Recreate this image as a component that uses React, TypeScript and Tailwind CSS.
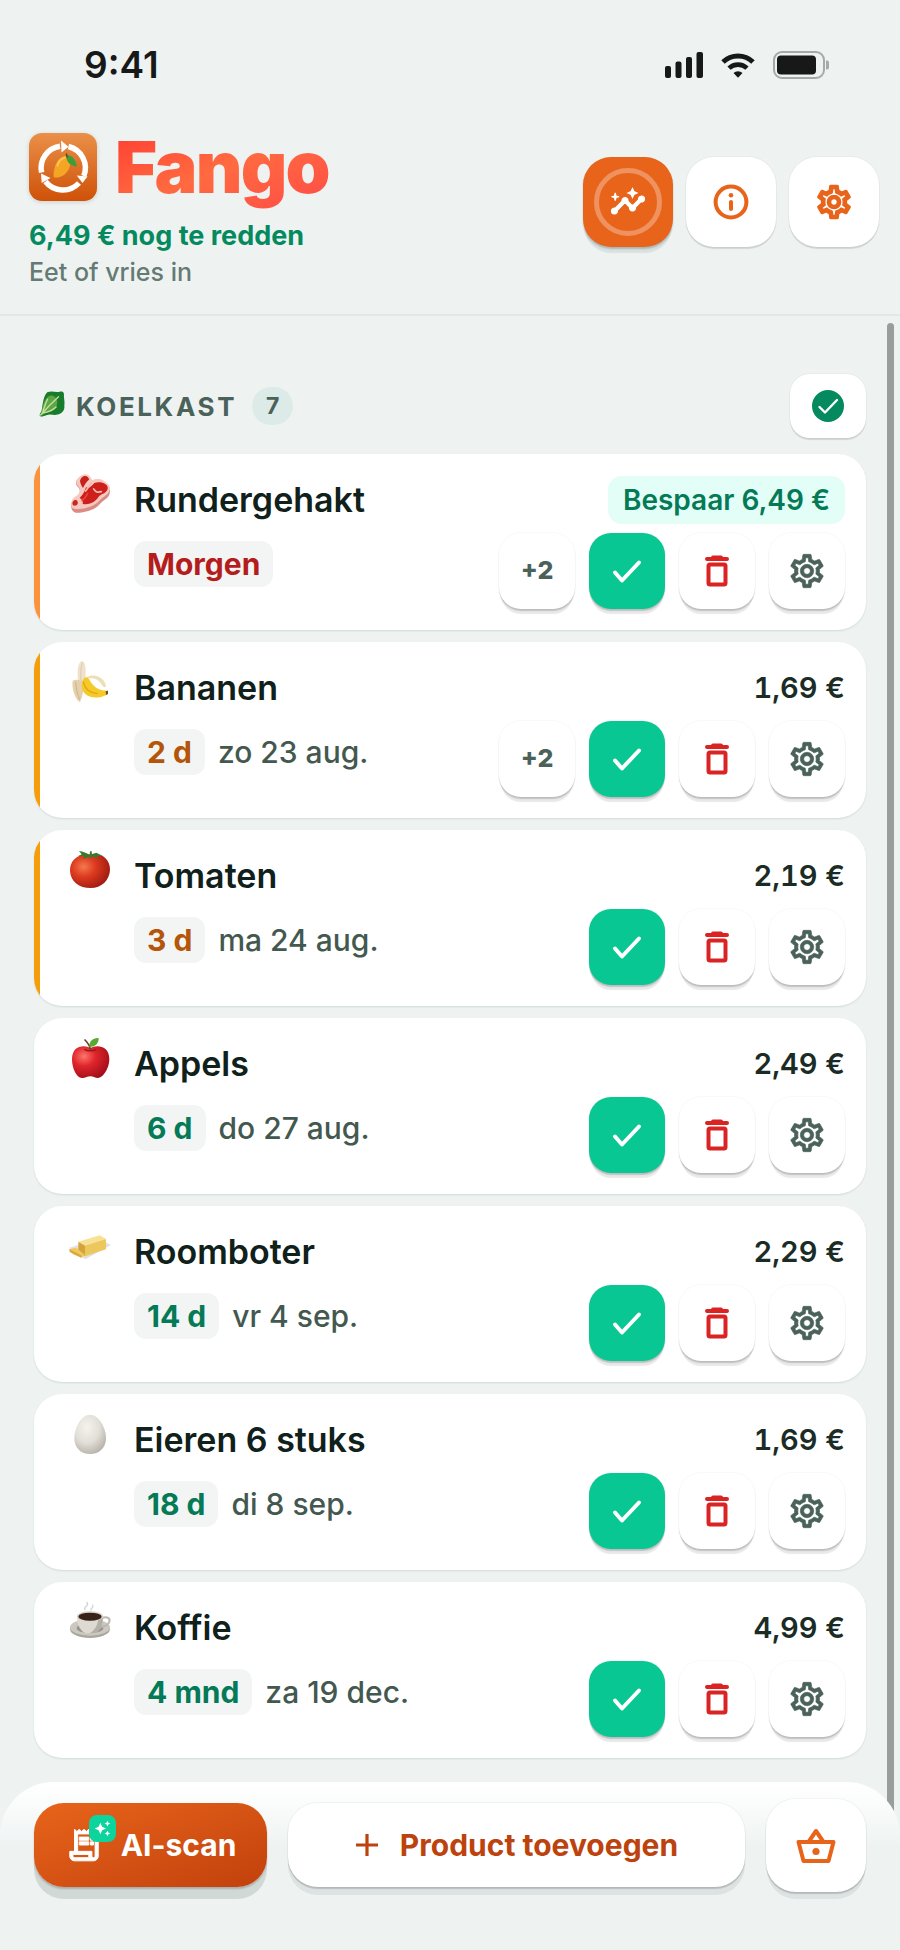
import type { ReactNode } from "react";
import { MdAutoAwesome, MdInsights, MdOutlineReceiptLong, MdOutlineSettings } from "react-icons/md";

type Tone = "urgent" | "soon" | "fresh";

interface Product {
  id: string;
  name: string;
  left: string;
  date?: string;
  price: string;
  save?: boolean;
  extra?: string;
  tone: Tone;
  stripe?: string;
  icon: ReactNode;
}

const toneClass: Record<Tone, string> = {
  urgent: "text-[#b51c1c]",
  soon: "text-[#b4550a]",
  fresh: "text-[#047a57]",
};

function Art({ children }: { children: ReactNode }) {
  return (
    <svg viewBox="0 0 120 120" className="size-10 shrink-0 overflow-visible" aria-hidden="true">
      {children}
    </svg>
  );
}

const steak = (
  <Art>
    <path d="M44 4c8 0 17 9 19 18 12-5 26-6 36 2 10 7 18 14 18 26s-5 20-16 27-18 20-32 27-40 14-55 12C4 114-1 104 1 90c1-11 9-15 18-22 8-7 9-17 6-24-3-6-10-8-10-16C15 14 31 4 44 4z" fill="#d98b84" />
    <path d="M44 1c8 0 17 9 19 18 12-5 26-6 36 2 10 7 18 12 18 22s-8 19-18 25-18 19-32 26-38 13-53 11S0 94 2 83s9-13 17-19c8-7 9-17 6-24-3-6-9-8-9-14C16 12 32 1 44 1z" fill="#f6c9c0" />
    <path d="M38 7c8-4 14 3 17 9-7 6-14 16-19 26-4-6-8-13-9-22 2-6 5-11 11-13z" fill="#c7221b" />
    <path d="M70 27c14-5 37-1 40 13 2 11-9 18-20 22-7 3-8 9-15 16-12 11-28 15-40 12 3-11-6-16-9-19 10-8 15-19 19-31 9 5 17-4 25-13z" fill="#cf1f1b" />
    <path d="M5 84c5-8 13-7 15 0 2 8-4 11-10 11-5 0-7-6-5-11z" fill="#c9271f" />
    <path d="M61 27L44 51M68 45c7 10 11 11 23 8" stroke="#f4b9ad" strokeWidth="5" fill="none" strokeLinecap="round" />
    <path d="M50 58c-5 11-9 17-17 22" stroke="#e74b3f" strokeWidth="4" fill="none" strokeLinecap="round" />
  </Art>
);

const banana = (
  <Art>
    <path d="M22 60C17 35 20 3 31-2c12-2 13 18 13 33 0 12-1 21-2 30z" fill="#efe1cb" />
    <path d="M34 2c-5 16-6 35-4 54" stroke="#dccbb0" strokeWidth="3" fill="none" />
    <path d="M5 56c9-5 25-3 32 4 2 18-1 42-10 60-10-2-26-36-22-64z" fill="#e5d0ac" />
    <path d="M14 60c1 21 6 38 12 53" stroke="#cbb48c" strokeWidth="3" fill="none" />
    <path d="M46 46c24-14 56 2 59 26-3 6-9 4-12-2-9-16-23-24-42-20z" fill="#efdfb9" />
    <path d="M38 50c7-8 14-3 19 6 12 20 29 31 53 30 3 5 1 11-4 13-27 14-65 9-72-17-3-12-2-24 4-32z" fill="#f5c928" />
    <path d="M37 59c4 21 18 34 43 36" stroke="#e2a911" strokeWidth="4" fill="none" />
    <path d="M104 87l7-1v10l-6 3z" fill="#76521c" />
  </Art>
);

const tomato = (
  <Art>
    <defs>
      <radialGradient id="tomatoSkin" cx="34%" cy="38%" r="75%">
        <stop offset="0" stopColor="#f47a4c" />
        <stop offset="0.4" stopColor="#dc3a1f" />
        <stop offset="1" stopColor="#96160f" />
      </radialGradient>
    </defs>
    <path d="M55 13c32-9 63 12 62 46-1 32-26 55-58 55C25 114-2 94-3 62-4 31 22 9 55 13z" fill="url(#tomatoSkin)" />
    <path d="M56 16c-9-8-20-11-32-13l8 10-10 5 18-1-4 11 18-8 5 7 4-8 20 8-7-10 19 1-19-10-13 5-1-9h-5z" fill="#397a30" />
  </Art>
);

const apple = (
  <Art>
    <defs>
      <radialGradient id="appleSkin" cx="32%" cy="32%" r="78%">
        <stop offset="0" stopColor="#ff756b" />
        <stop offset="0.4" stopColor="#de252b" />
        <stop offset="1" stopColor="#9e0c18" />
      </radialGradient>
    </defs>
    <path d="M58 31c12-11 57-13 57 32 0 31-21 57-34 57-10 0-14-5-23-5s-15 6-26 5C17 119 3 92 3 64 3 19 45 20 58 31z" fill="url(#appleSkin)" />
    <path d="M40 34c10 6 26 6 36 0" stroke="#9f131c" strokeWidth="4" fill="none" />
    <path d="M58 35C57 22 49 13 42 6" stroke="#69402c" strokeWidth="5" strokeLinecap="round" fill="none" />
    <path d="M55 27C54 10 65-1 83 0c1 15-10 27-28 27z" fill="#57ab2f" />
  </Art>
);

const butter = (
  <Art>
    <path d="M-5 65L80 38l40 19-77 43z" fill="#dfe1e6" />
    <path d="M22 47l64-19 19 11-63 20z" fill="#f9e193" />
    <path d="M42 59l63-20v31L42 91z" fill="#ecc75c" />
    <path d="M22 47l20 12v32L22 79z" fill="#d4a33c" />
    <path d="M-5 69l20-4 27 22-10 8-26-10z" fill="#efc95e" />
    <path d="M-5 69l1 9 35 17v-7z" fill="#d9a940" />
  </Art>
);

const egg = (
  <Art>
    <defs>
      <radialGradient id="eggShell" cx="40%" cy="32%" r="72%">
        <stop offset="0" stopColor="#f5f3ee" />
        <stop offset="0.55" stopColor="#e2dfd8" />
        <stop offset="1" stopColor="#b7b2aa" />
      </radialGradient>
    </defs>
    <path d="M57 2c27 0 48 41 48 70 0 31-21 48-48 48S10 103 10 72C10 43 30 2 57 2z" fill="url(#eggShell)" />
  </Art>
);

const coffee = (
  <Art>
    <ellipse cx="57" cy="81" rx="60" ry="27" fill="#aaa69e" />
    <ellipse cx="57" cy="76" rx="60" ry="25" fill="#cbc8c2" />
    <ellipse cx="57" cy="79" rx="40" ry="15" fill="#99958e" />
    <path d="M92 49c15-7 27-1 23 10-3 10-16 15-29 16" fill="none" stroke="#bcb8b0" strokeWidth="6" />
    <path d="M18 43h78c0 27-11 46-27 51H45C29 89 18 70 18 43z" fill="#ded9d1" />
    <path d="M82 48h14c0 26-12 42-27 46H56c15-9 25-24 26-46z" fill="#b5b0a7" />
    <ellipse cx="57" cy="43" rx="39" ry="15" fill="#d7d2ca" />
    <ellipse cx="57" cy="44" rx="35" ry="12" fill="#38231b" />
    <path d="M42 23c-5-13 14-9 6-22M60 25c-2-9 10-7 5-16" fill="none" stroke="#d3d4d5" strokeWidth="4" strokeLinecap="round" />
  </Art>
);

const products: Product[] = [
  { id: "rundergehakt", name: "Rundergehakt", left: "Morgen", price: "6,49 €", save: true, extra: "+2", tone: "urgent", stripe: "bg-[#fb923c]", icon: steak },
  { id: "bananen", name: "Bananen", left: "2 d", date: "zo 23 aug.", price: "1,69 €", extra: "+2", tone: "soon", stripe: "bg-[#f59e0b]", icon: banana },
  { id: "tomaten", name: "Tomaten", left: "3 d", date: "ma 24 aug.", price: "2,19 €", tone: "soon", stripe: "bg-[#f59e0b]", icon: tomato },
  { id: "appels", name: "Appels", left: "6 d", date: "do 27 aug.", price: "2,49 €", tone: "fresh", icon: apple },
  { id: "roomboter", name: "Roomboter", left: "14 d", date: "vr 4 sep.", price: "2,29 €", tone: "fresh", icon: butter },
  { id: "eieren", name: "Eieren 6 stuks", left: "18 d", date: "di 8 sep.", price: "1,69 €", tone: "fresh", icon: egg },
  { id: "koffie", name: "Koffie", left: "4 mnd", date: "za 19 dec.", price: "4,99 €", tone: "fresh", icon: coffee },
];

function StatusBar() {
  return (
    <div className="flex h-[130px] items-center justify-between pr-[71px] pl-[84px] text-[#171918]">
      <span className="text-[37px] font-semibold">9:41</span>
      <div className="flex items-center gap-[18px]">
        <svg viewBox="0 0 38 26" className="h-[26px] w-[38px]" fill="currentColor" aria-hidden="true">
          <rect x="0" y="14" width="6" height="12" rx="2" />
          <rect x="10.5" y="9.5" width="6" height="16.5" rx="2" />
          <rect x="21" y="5" width="6" height="21" rx="2" />
          <rect x="31.5" y="0" width="6.5" height="26" rx="2" />
        </svg>
        <svg viewBox="0 0 34 25" className="h-[25px] w-[34px]" aria-hidden="true">
          <path d="M2 9a21.5 21.5 0 0 1 30 0" fill="none" stroke="currentColor" strokeWidth="5" />
          <path d="M8 15.2a13 13 0 0 1 18 0" fill="none" stroke="currentColor" strokeWidth="4.6" />
          <path d="M12.5 20a6.4 6.4 0 0 1 9 0L17 24.8z" fill="currentColor" />
        </svg>
        <svg viewBox="0 0 56 28" className="h-7 w-14" aria-hidden="true">
          <rect x="1" y="1" width="50" height="26" rx="8" fill="none" stroke="#a5a9a7" strokeWidth="2" />
          <rect x="4" y="4.5" width="39" height="19" rx="4" fill="currentColor" />
          <path d="M53 9.500h1a2 2 0 0 1 2 2v5a2 2 0 0 1-2 2h-1z" fill="#a5a9a7" />
        </svg>
      </div>
    </div>
  );
}

function Logo() {
  return (
    <svg viewBox="0 0 68 68" className="size-[68px] drop-shadow-sm" aria-hidden="true">
      <defs>
        <linearGradient id="logoBg" x2="0" y2="1">
          <stop offset="0" stopColor="#ea9049" />
          <stop offset="1" stopColor="#cf5108" />
        </linearGradient>
      </defs>
      <rect width="68" height="68" rx="13" fill="url(#logoBg)" />
      <g fill="none" stroke="#fff" strokeWidth="5.5">
        <path d="M12.600 39.500A22 22 0 0 1 31 13.200" />
        <path d="M39.500 13.500A22 22 0 0 1 54.800 43" />
        <path d="M50 50A22 22 0 0 1 16.500 48.500" />
      </g>
      <g fill="#fff">
        <path d="M32 7.500l7.500 6.200-7 5.800z" />
        <path d="M58.500 43.500l-5 6.500-5.700-7.500z" />
        <path d="M12 40.500l9.500 4.500-8.800 5z" />
      </g>
      <path d="M38 23c4 2 4.500 8 1.500 13.500C36.500 42 32 45 25 44.500c-.8-3.500-.3-6 .5-9C27 29 31 23 38 23z" fill="#f5a524" />
      <path d="M36 24.500c-4 1-6.500 4-7.500 8" stroke="#ffc650" strokeWidth="2" fill="none" strokeLinecap="round" />
      <path d="M37 22.500c6-1 9.500 4 10.800 11-6-.5-10.300-4-10.800-11z" fill="#3c9d3a" />
      <path d="M38 24l-.5-3" stroke="#6c4520" strokeWidth="1.5" strokeLinecap="round" />
    </svg>
  );
}

function Header() {
  return (
    <header className="flex items-start justify-between border-b-2 border-[#e0e9e6] pr-[21px] pb-6 pl-[29px]">
      <div className="pt-[3px]">
        <div className="flex h-[68px] items-center gap-[18px]">
          <Logo />
          <h1 className="bg-linear-to-br from-[#ff3131] via-[#ff6a40] to-[#ff4747] bg-clip-text py-3 text-[72px] leading-[72px] font-black tracking-tight text-transparent">
            Fango
          </h1>
        </div>
        <p className="mt-[17px] text-[27px] leading-9 font-bold text-[#058a5f]">6,49 € nog te redden</p>
        <p className="text-[25px] leading-9 font-medium text-[#647a73]">Eet of vries in</p>
      </div>
      <div className="mt-[27px] flex gap-[13px]">
        <button
          type="button"
          aria-label="Inzichten"
          className="flex size-[90px] items-center justify-center rounded-[28px] bg-[#e8641b] text-white shadow-[0_2px_2px_rgba(0,0,0,0.2),0_7px_1px_-1px_rgba(0,60,50,0.09)]"
        >
          <span className="flex size-[68px] items-center justify-center rounded-full border-[5px] border-white/30">
            <MdInsights className="size-9 [&_path[fill=none]]:stroke-none" stroke="currentColor" strokeWidth="0.8" />
          </span>
        </button>
        <button
          type="button"
          aria-label="Informatie"
          className="flex size-[90px] items-center justify-center rounded-[28px] bg-white text-[#e8641b] shadow-[0_0_0_1px_rgba(0,40,30,0.03),0_2px_1px_rgba(0,0,0,0.12)]"
        >
          <svg viewBox="0 0 36 36" className="size-9" fill="none" stroke="currentColor" aria-hidden="true">
            <circle cx="18" cy="18" r="15.4" strokeWidth="4" />
            <path d="M18 18v7" strokeWidth="4" strokeLinecap="round" />
            <circle cx="18" cy="11.2" r="2.3" fill="currentColor" stroke="none" />
          </svg>
        </button>
        <button
          type="button"
          aria-label="Instellingen"
          className="flex size-[90px] items-center justify-center rounded-[28px] bg-white text-[#e8641b] shadow-[0_0_0_1px_rgba(0,40,30,0.03),0_2px_1px_rgba(0,0,0,0.12)]"
        >
          <MdOutlineSettings className="size-10 [&_path[fill=none]]:stroke-none" stroke="currentColor" strokeWidth="0.8" />
        </button>
      </div>
    </header>
  );
}

const actionClass =
  "flex size-[76px] items-center justify-center rounded-[22px] shadow-[0_0_0_1px_rgba(0,0,0,0.025),0_2px_1px_rgba(0,0,0,0.16),0_7px_1px_-2px_rgba(0,0,0,0.09)]";

function ProductCard({ product }: { product: Product }) {
  return (
    <li className="relative flex gap-[23px] overflow-hidden rounded-[28px] bg-white pt-5 pr-[21px] pb-[21px] pl-[37px] shadow-[0_1px_2px_rgba(0,40,30,0.12)]">
      {product.stripe && <span className={`absolute inset-y-0 left-0 w-1.5 ${product.stripe}`} />}
      {product.icon}
      <div className="min-w-0 flex-1 pt-0.5">
        <div className="flex h-12 items-center justify-between">
          <h3 className="text-[34px] leading-10 font-semibold text-[#10201b]">{product.name}</h3>
          {product.save ? (
            <span className="rounded-[14px] bg-[#e3fef6] px-[15px] text-[28px] leading-[48px] font-semibold text-[#047a57]">
              Bespaar {product.price}
            </span>
          ) : (
            <span className="text-[29px] leading-10 font-semibold text-[#1b2b26] tabular-nums">{product.price}</span>
          )}
        </div>
        <div className="mt-[9px] flex items-start justify-between">
          <div className="mt-2 flex items-center gap-[13px]">
            <span className={`rounded-xl bg-[#f3f5f5] px-[13px] text-[30px] leading-[46px] font-bold ${toneClass[product.tone]}`}>
              {product.left}
            </span>
            {product.date && <span className="text-[30px] leading-[46px] font-medium text-[#43584f]">{product.date}</span>}
          </div>
          <div className="flex gap-[14px]">
            {product.extra && (
              <button type="button" className={`${actionClass} bg-white text-[25px] font-extrabold text-[#4a625a]`}>
                {product.extra}
              </button>
            )}
            <button type="button" aria-label="Opgegeten" className={`${actionClass} bg-[#08c792] text-white`}>
              <svg viewBox="0 0 40 40" className="size-10" fill="none" stroke="currentColor" strokeWidth="4" strokeLinecap="round" strokeLinejoin="round" aria-hidden="true">
                <path d="M8 21.500l7 8L32 11.500" />
              </svg>
            </button>
            <button type="button" aria-label="Weggooien" className={`${actionClass} bg-white text-[#da2424]`}>
              <svg viewBox="0 0 40 40" className="size-10" fill="none" stroke="currentColor" strokeWidth="4" aria-hidden="true">
                <rect x="11.5" y="13.5" width="17" height="20" rx="1.5" />
                <path d="M10 8h20" strokeLinecap="round" />
                <path d="M16 6.500h8" strokeLinecap="round" />
              </svg>
            </button>
            <button type="button" aria-label="Bewerken" className={`${actionClass} bg-white text-[#4a625a]`}>
              <MdOutlineSettings className="size-10 [&_path[fill=none]]:stroke-none" stroke="currentColor" strokeWidth="0.4" />
            </button>
          </div>
        </div>
      </div>
    </li>
  );
}

function BottomBar() {
  return (
    <footer className="relative z-10 mt-6 flex items-start gap-[21px] rounded-t-[54px] bg-[linear-gradient(to_bottom,#ffffff_0px,#fafbfb_25px,#eef3f2_65px)] px-[34px] pt-[17px] pb-[52px]">
      <button
        type="button"
        className="mt-1 flex h-[84px] w-[233px] items-center justify-center gap-[18px] rounded-[30px] bg-linear-to-br from-[#e8641b] to-[#c2410c] text-[30px] font-bold text-white shadow-[0_2px_2px_rgba(0,0,0,0.2),0_12px_0_rgba(0,30,25,0.12)]"
      >
        <span className="relative">
          <MdOutlineReceiptLong className="size-[38px] [&_path[fill=none]]:stroke-none" stroke="currentColor" strokeWidth="0.6" />
          <span className="absolute -top-[11px] -right-[13px] flex size-[27px] items-center justify-center rounded-lg bg-[#0dd39d]">
            <MdAutoAwesome className="size-[17px]" />
          </span>
        </span>
        AI-scan
      </button>
      <button
        type="button"
        className="mt-1 flex h-[84px] flex-1 items-center justify-center gap-[21px] rounded-[30px] bg-white text-[30px] font-bold text-[#bd430e] shadow-[0_0_0_1px_rgba(0,40,30,0.04),0_2px_1px_rgba(0,0,0,0.16),0_8px_0_rgba(0,30,25,0.07)]"
      >
        <svg viewBox="0 0 24 24" className="size-6" stroke="currentColor" strokeWidth="3.2" aria-hidden="true">
          <path d="M12 1v22M1 12h22" />
        </svg>
        Product toevoegen
      </button>
      <button
        type="button"
        aria-label="Boodschappenlijst"
        className="flex h-[93px] w-[100px] items-center justify-center rounded-[30px] bg-white text-[#e8641b] shadow-[0_0_0_1px_rgba(0,40,30,0.04),0_2px_1px_rgba(0,0,0,0.16),0_8px_0_-1px_rgba(0,30,25,0.07)]"
      >
        <svg viewBox="0 0 40 36" className="h-9 w-10" fill="none" stroke="currentColor" strokeWidth="4" strokeLinejoin="round" aria-hidden="true">
          <path d="M2.500 14h35l-5 19h-25z" />
          <path d="M12.500 14L20 3l7.500 11" />
          <circle cx="20" cy="23.5" r="3.6" fill="currentColor" stroke="none" />
        </svg>
      </button>
    </footer>
  );
}

export default function App() {
  return (
    <div className="min-h-screen overflow-hidden bg-[#eef3f2] font-['Inter','Liberation_Sans',sans-serif]">
      <StatusBar />
      <Header />
      <main className="relative px-[34px] pt-[58px]">
        <div className="flex h-16 items-center">
          <h2 className="flex items-center gap-[11px] pl-[5px] text-[26px] font-bold tracking-widest text-[#4a625a]">
            <svg viewBox="0 0 76 76" className="mb-1 size-[26px]" aria-hidden="true">
              <path d="M24 4c13-6 25 1 36-2 6-1 12 0 13 6-1 13 3 22 1 34 2 13-6 24-20 27-11 3-20-3-33 2-7 2-14 6-18 2-4-5 4-10 5-17C11 40 12 16 24 4z" fill="#177c2b" />
              <path d="M27 16c10-6 18-2 23 6 7 9 3 25-7 33C33 63 19 63 9 71L4 68c6-10 4-18 8-28 3-9 7-18 15-24z" fill="#5da643" />
              <path d="M5 70c17-19 29-32 52-53M10 64c5-14 8-27 15-40M13 64c15-3 28-8 37-17" stroke="#c8dfa0" strokeWidth="4" fill="none" strokeLinecap="round" />
            </svg>
            KOELKAST
          </h2>
          <span className="ml-[15px] rounded-full bg-[#dcebe8] px-[14px] text-[23px] leading-[38px] font-bold text-[#4a625a]">7</span>
          <button
            type="button"
            aria-label="Alles afvinken"
            className="ml-auto flex h-16 w-[76px] items-center justify-center rounded-[20px] bg-white shadow-[0_0_0_1px_rgba(0,40,30,0.03),0_2px_1px_rgba(0,0,0,0.12)]"
          >
            <svg viewBox="0 0 32 32" className="size-8" aria-hidden="true">
              <circle cx="16" cy="16" r="16" fill="#058a5f" />
              <path d="M7.500 17l5.500 5.500L25 10" fill="none" stroke="#fff" strokeWidth="2.4" strokeLinecap="round" strokeLinejoin="round" />
            </svg>
          </button>
        </div>
        <ul className="mt-4 flex flex-col gap-3">
          {products.map((product) => (
            <ProductCard key={product.id} product={product} />
          ))}
        </ul>
        <div className="absolute top-[7px] right-1.5 -bottom-[60px] w-[7px] rounded-full bg-[#999e9c]" />
      </main>
      <BottomBar />
    </div>
  );
}
